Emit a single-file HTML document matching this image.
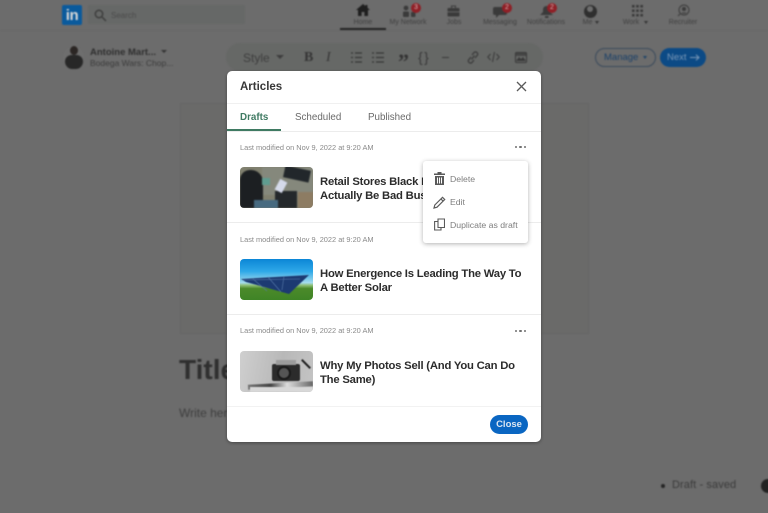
<!DOCTYPE html>
<html><head><meta charset="utf-8">
<style>
*{box-sizing:border-box;margin:0;padding:0}
html,body{width:768px;height:513px;overflow:hidden;background:#6c6c6c}
body{font-family:"Liberation Sans",sans-serif;position:relative;color:#222}
.a{position:absolute;white-space:nowrap}
.bg{position:absolute;left:0;top:0;width:768px;height:513px;filter:blur(.7px)}
.nl{font-size:7px;color:#3f3f3f;text-align:center;width:60px}
.bdg{position:absolute;width:10px;height:10px;border-radius:50%;background:#8f1f26;color:#d8b8b8;font-size:7px;line-height:10px;text-align:center}
.modal{position:absolute;left:227px;top:71px;width:314px;height:371px;background:#fff;border-radius:5px;box-shadow:0 1px 3px rgba(0,0,0,.35);filter:blur(.35px);overflow:hidden}
.mod{font-size:7.4px;color:#8a8a8a}
.ti{font-size:11.3px;font-weight:bold;color:#2c2c2c;line-height:14.2px;letter-spacing:-.22px}
.hr{position:absolute;left:0;width:314px;height:1px;background:#ececec}
.th{position:absolute;left:13px;width:73px;height:41px;border-radius:4px;overflow:hidden}
.dots{position:absolute;left:288px;width:11px;height:3px}
.dots i{position:absolute;top:0;width:2.4px;height:2.4px;border-radius:50%;background:#707070}
.menu{position:absolute;left:196px;top:90px;width:105px;height:82px;background:#fff;border-radius:3px;box-shadow:0 1px 5px rgba(0,0,0,.3)}
.mi{position:absolute;left:27px;font-size:8.7px;color:#7e7e7e}
</style></head>
<body>
<div class="bg">
 <!-- nav -->
 <div class="a" style="left:62px;top:5px;width:20px;height:20px;background:#0a5a9c;border-radius:2px;color:#d9d9d9;font-weight:bold;font-size:15px;line-height:21px;text-align:center;letter-spacing:-.4px">in</div>
 <div class="a" style="left:88px;top:5px;width:157px;height:19px;background:#666867;border-radius:2px"></div>
 <svg class="a" style="left:94px;top:9px" width="13" height="13" viewBox="0 0 13 13" fill="none" stroke="#3d3d3d" stroke-width="1.5"><circle cx="5" cy="5" r="3.7"/><path d="M8 8l4 4"/></svg>
 <div class="a" style="left:111px;top:11px;font-size:8px;color:#4a4a4a">Search</div>
 <svg class="a" style="left:356px;top:4px" width="14" height="12" viewBox="0 0 14 12"><path d="M7 0L0 6h2v6h3.6V8h2.8v4H12V6h2L11.500 3.800V1h-2v1z" fill="#1f1f1f"/></svg>
 <div class="a nl" style="left:333px;top:19px">Home</div>
 <div class="a" style="left:340px;top:28px;width:46px;height:2px;background:#222"></div>
 <svg class="a" style="left:402px;top:5px" width="14" height="12" viewBox="0 0 14 12" fill="#3a3a3a"><circle cx="4" cy="3" r="2.400"/><rect x="1" y="6.500" width="6" height="5.500" rx="1"/><rect x="9" y="7" width="4.500" height="5" rx="1"/></svg>
 <div class="bdg" style="left:411px;top:3px">3</div>
 <div class="a nl" style="left:378px;top:19px">My Network</div>
 <svg class="a" style="left:447px;top:5px" width="13" height="12" viewBox="0 0 13 12"><path d="M4.500 3V1h4v2" stroke="#3a3a3a" fill="none"/><rect x="0.500" y="3" width="12" height="8.500" rx="1" fill="#3a3a3a"/><rect x="0.500" y="6.500" width="12" height=".7" fill="#777"/></svg>
 <div class="a nl" style="left:424px;top:19px">Jobs</div>
 <svg class="a" style="left:493px;top:6px" width="14" height="12" viewBox="0 0 14 12" fill="#3a3a3a"><path d="M2 1h10a2 2 0 0 1 2 2v4a2 2 0 0 1-2 2H6l-3 3V9H2a2 2 0 0 1-2-2V3a2 2 0 0 1 2-2z"/></svg>
 <div class="bdg" style="left:502px;top:3px">2</div>
 <div class="a nl" style="left:470px;top:19px">Messaging</div>
 <svg class="a" style="left:540px;top:6px" width="13" height="12" viewBox="0 0 13 12" fill="#3a3a3a"><path d="M6.500 0C4 0 3 2 3 4v2L0 9h13l-3-3V4c0-2-1-4-3.500-4z"/><rect x="5" y="10" width="3.500" height="2"/></svg>
 <div class="bdg" style="left:547px;top:3px">2</div>
 <div class="a nl" style="left:516px;top:19px">Notifications</div>
 <div class="a" style="left:584px;top:5px;width:13px;height:13px;border-radius:50%;background:#2f2f2f"></div>
 <div class="a" style="left:587px;top:6px;width:6px;height:6px;border-radius:50%;background:#6e6e6e"></div>
 <div class="a nl" style="left:559px;top:19px;padding-right:3px">Me</div>
 <div class="a" style="left:595px;top:21px;border:2.500px solid transparent;border-top:3px solid #333"></div>
 <svg class="a" style="left:632px;top:5px" width="11" height="12" viewBox="0 0 11 12" fill="#383838"><rect x="0" y="0" width="2.500" height="2.500"/><rect x="4.200" y="0" width="2.500" height="2.500"/><rect x="8.400" y="0" width="2.500" height="2.500"/><rect x="0" y="4.500" width="2.500" height="2.500"/><rect x="4.200" y="4.500" width="2.500" height="2.500"/><rect x="8.400" y="4.500" width="2.500" height="2.500"/><rect x="0" y="9" width="2.500" height="2.500"/><rect x="4.200" y="9" width="2.500" height="2.500"/><rect x="8.400" y="9" width="2.500" height="2.500"/></svg>
 <div class="a nl" style="left:603px;top:19px;padding-right:4px">Work</div>
 <div class="a" style="left:644px;top:21px;border:2.500px solid transparent;border-top:3px solid #333"></div>
 <svg class="a" style="left:677px;top:4px" width="13" height="13" viewBox="0 0 13 13" fill="none" stroke="#3a3a3a" stroke-width="1"><circle cx="7" cy="6" r="5"/><circle cx="7" cy="5" r="1.500" fill="#3a3a3a"/><path d="M5 9h4M3 10l-2 2"/></svg>
 <div class="a nl" style="left:653px;top:19px">Recruiter</div>
 <div class="a" style="left:0;top:30px;width:768px;height:1px;background:#676767"></div>

 <!-- author -->
 <div class="a" style="left:63px;top:46px;width:21px;height:23px;border-radius:50%;background:#6e6e6e"></div>
 <div class="a" style="left:70px;top:46px;width:8px;height:9px;border-radius:50%;background:#2b2624"></div>
 <div class="a" style="left:65px;top:55px;width:18px;height:14px;border-radius:8px 8px 9px 9px;background:#272727"></div>
 <div class="a" style="left:90px;top:47px;font-size:9.500px;font-weight:bold;color:#2e2e2e">Antoine Mart...</div>
 <div class="a" style="left:161px;top:50px;border:3px solid transparent;border-top:3px solid #333"></div>
 <div class="a" style="left:90px;top:58px;font-size:8.500px;color:#3b3b3b">Bodega Wars: Chop...</div>

 <!-- toolbar -->
 <div class="a" style="left:226px;top:43px;width:317px;height:28px;background:#666866;border-radius:14px"></div>
 <div class="a" style="left:243px;top:51px;font-size:12px;color:#3d3d3d">Style</div>
 <div class="a" style="left:276px;top:55px;border:4px solid transparent;border-top:4px solid #3d3d3d"></div>
 <div class="a" style="left:304px;top:50px;font:bold 14px 'Liberation Serif',serif;color:#353535">B</div>
 <div class="a" style="left:326px;top:50px;font:italic 14px 'Liberation Serif',serif;color:#353535">I</div>
 <svg class="a" style="left:351px;top:51px" width="34" height="13" viewBox="0 0 34 13" stroke="#353535" stroke-width="1.300"><path d="M4 2h7M4 6.500h7M4 11h7M0 2h2M0 6.500h2M0 11h2M25 2h8M25 6.500h8M25 11h8M21 2h2M21 6.500h2M21 11h2"/></svg>
 <div class="a" style="left:398px;top:52px;font:bold 22px 'Liberation Serif',serif;color:#333;line-height:20px">”</div>
 <div class="a" style="left:418px;top:49px;font-size:14px;color:#383838;letter-spacing:1.5px">{}</div>
 <div class="a" style="left:442px;top:57px;width:7px;height:1px;background:#383838"></div>
 <svg class="a" style="left:467px;top:51px" width="12" height="13" viewBox="0 0 12 13" fill="none" stroke="#383838" stroke-width="1.200"><path d="M5 4l2-2.500a2.200 2.200 0 0 1 3.500 2.500L8 7M7 9l-2 2.500A2.200 2.200 0 0 1 1.500 9L4 6M4.500 8.500l3-4"/></svg>
 <svg class="a" style="left:487px;top:51px" width="13" height="12" viewBox="0 0 13 12" fill="none" stroke="#383838" stroke-width="1"><path d="M3.500 3L.8 6l2.700 3M9.500 3l2.700 3-2.700 3M7.500 1L5.500 11"/></svg>
 <svg class="a" style="left:515px;top:52px" width="12" height="11" viewBox="0 0 12 11"><rect x=".5" y=".5" width="11" height="10" rx="1" fill="none" stroke="#383838"/><path d="M1 9l3-4 2 2 2-2 3 4z" fill="#383838"/><rect x="1" y="1" width="10" height="3" fill="#383838" opacity=".7"/></svg>

 <!-- manage next -->
 <div class="a" style="left:595px;top:48px;width:61px;height:19px;border:1px solid #3a4a5c;border-radius:10px;font-size:9.500px;color:#1a4068;line-height:18px;padding-left:8px">Manage</div>
 <div class="a" style="left:643px;top:56px;border:2.500px solid transparent;border-top:3px solid #1f4468"></div>
 <div class="a" style="left:660px;top:48px;width:46px;height:19px;background:#0c4a85;border-radius:10px;font-size:9.500px;color:#7a98b8;line-height:19px;padding-left:7px">Next</div>
 <svg class="a" style="left:690px;top:54px" width="10" height="7" viewBox="0 0 10 7" fill="none" stroke="#7a98b8" stroke-width="1"><path d="M0 3.500h9M6 .8l3 2.700-3 2.700"/></svg>

 <!-- cover -->
 <div class="a" style="left:180px;top:103px;width:409px;height:231px;background:#6a6a69;border:1px solid #666665"></div>
 <div class="a" style="left:179px;top:354px;font-size:28px;font-weight:bold;color:#2f2f2f">Title</div>
 <div class="a" style="left:179px;top:406px;font-size:12px;color:#3e3e3e">Write here</div>

 <!-- draft -->
 <div class="a" style="left:661px;top:484px;width:4px;height:4px;border-radius:50%;background:#252525"></div>
 <div class="a" style="left:672px;top:479px;font-size:11px;color:#3a3a3a;letter-spacing:.1px">Draft - saved</div>
 <div class="a" style="left:761px;top:479px;width:14px;height:14px;border-radius:50%;background:#222"></div>
</div>

<div class="modal">
 <div class="a" style="left:13px;top:10px;font-size:11.500px;font-weight:bold;color:#383838">Articles</div>
 <svg class="a" style="left:289px;top:10px" width="11" height="11" viewBox="0 0 11 11" stroke="#5a5a5a" stroke-width="1.300"><path d="M1 1l9 9M10 1l-9 9"/></svg>
 <div class="hr" style="top:32px;background:#f0f0f0"></div>
 <div class="a" style="left:13px;top:41px;font-size:9.800px;font-weight:bold;color:#3f7a62">Drafts</div>
 <div class="a" style="left:68px;top:41px;font-size:9.800px;color:#6a6a6a">Scheduled</div>
 <div class="a" style="left:141px;top:41px;font-size:9.800px;color:#6a6a6a">Published</div>
 <div class="a" style="left:0;top:58px;width:54px;height:2px;background:#3f7a62"></div>
 <div class="hr" style="top:60px"></div>

 <div class="a mod" style="left:13px;top:72px">Last modified on Nov 9, 2022 at 9:20 AM</div>
 <div class="dots" style="top:75px"><i style="left:0"></i><i style="left:4.300px"></i><i style="left:8.600px"></i></div>
 <div class="th" style="top:96px;background:#80806f">
  <div style="position:absolute;inset:0;filter:blur(.8px)">
   <div class="a" style="left:22px;top:0;width:51px;height:28px;background:#85887c"></div>
   <div class="a" style="left:44px;top:1px;width:26px;height:12px;background:#22272b;transform:rotate(12deg)"></div>
   <div class="a" style="left:0;top:3px;width:23px;height:38px;background:#1c1f22;border-radius:10px 12px 0 0"></div>
   <div class="a" style="left:22px;top:11px;width:8px;height:7px;background:#5f9c90"></div>
   <div class="a" style="left:35px;top:24px;width:22px;height:17px;background:#24282b"></div>
   <div class="a" style="left:37px;top:13px;width:8px;height:12px;background:#d5daea;transform:rotate(28deg)"></div>
   <div class="a" style="left:14px;top:33px;width:24px;height:8px;background:#476a80"></div>
   <div class="a" style="left:58px;top:25px;width:15px;height:16px;background:#8d7c63"></div>
  </div>
 </div>
 <div class="a ti" style="left:93px;top:104px">Retail Stores Black F<br>Actually Be Bad Bus</div>
 <div class="hr" style="top:151px"></div>

 <div class="a mod" style="left:13px;top:164px">Last modified on Nov 9, 2022 at 9:20 AM</div>
 <div class="th" style="top:188px;background:linear-gradient(180deg,#0b86d6 0%,#2ea8e8 30%,#a5dcec 58%,#8fc078 64%,#4b8a2a 72%,#3f8426 100%)">
  <svg class="a" style="left:0;top:0;filter:blur(.4px)" width="73" height="41" viewBox="0 0 73 41"><path d="M1 20L69 16 49 35 6 23z" fill="#1c3a72"/><path d="M3 21L60 20M13 20l14 12M28 18l13 15M44 17l-2 14" stroke="#5678a8" stroke-width=".6" fill="none"/></svg>
 </div>
 <div class="a ti" style="left:93px;top:196px">How Energence Is Leading The Way To<br>A Better Solar</div>
 <div class="hr" style="top:243px"></div>

 <div class="a mod" style="left:13px;top:255px">Last modified on Nov 9, 2022 at 9:20 AM</div>
 <div class="dots" style="top:259px"><i style="left:0"></i><i style="left:4.300px"></i><i style="left:8.600px"></i></div>
 <div class="th" style="top:280px;background:linear-gradient(100deg,#cfcfcf 0%,#b8b8b8 55%,#c4c4c4 100%)">
  <div style="position:absolute;inset:0;filter:blur(.6px)">
   <div class="a" style="left:8px;top:32px;width:65px;height:5px;background:linear-gradient(90deg,#777,#444 35%,#ddd 60%,#666);transform:rotate(-3deg)"></div>
   <div class="a" style="left:10px;top:36px;width:63px;height:5px;background:#d8d8d8"></div>
   <div class="a" style="left:32px;top:13px;width:28px;height:17px;background:#2b2b2b;border-radius:2px"></div>
   <div class="a" style="left:36px;top:9px;width:20px;height:5px;background:#9c9c9c"></div>
   <div class="a" style="left:37px;top:15px;width:14px;height:14px;border-radius:50%;background:#555;border:2px solid #1a1a1a"></div>
   <div class="a" style="left:60px;top:12px;width:12px;height:2px;background:#222;transform:rotate(45deg)"></div>
  </div>
 </div>
 <div class="a ti" style="left:93px;top:288px">Why My Photos Sell (And You Can Do<br>The Same)</div>
 <div class="hr" style="top:335px;background:#f2f2f2"></div>

 <div class="a" style="left:263px;top:344px;width:38px;height:19px;background:#0a66c2;border-radius:10px;color:#dbe6f2;font-size:9.500px;font-weight:bold;text-align:center;line-height:19px">Close</div>

 <div class="menu">
  <svg class="a" style="left:11px;top:11px" width="11" height="13" viewBox="0 0 11 13" fill="#5a5a5a"><rect x="0" y="1.500" width="11" height="1.500"/><rect x="3.500" y="0" width="4" height="2"/><path d="M1 4h9v9H1zM3 5.500v6h1v-6zM5 5.500v6h1v-6zM7 5.500v6h1v-6z" fill-rule="evenodd"/></svg>
  <div class="mi" style="top:13px">Delete</div>
  <svg class="a" style="left:10px;top:35px" width="13" height="13" viewBox="0 0 13 13" fill="none" stroke="#5a5a5a" stroke-width="1.200"><path d="M1 12l.8-3L9.500 1.300l2.200 2.200L4 11.200z"/><path d="M8 3l2.200 2.200"/></svg>
  <div class="mi" style="top:36px">Edit</div>
  <svg class="a" style="left:11px;top:57px" width="11" height="13" viewBox="0 0 11 13" fill="none" stroke="#5a5a5a" stroke-width="1.100"><path d="M4 1h6.500v8.500H4zM4 3.500H.6V12h6.400V9.500"/></svg>
  <div class="mi" style="top:59px">Duplicate as draft</div>
 </div>
</div>
</body></html>
